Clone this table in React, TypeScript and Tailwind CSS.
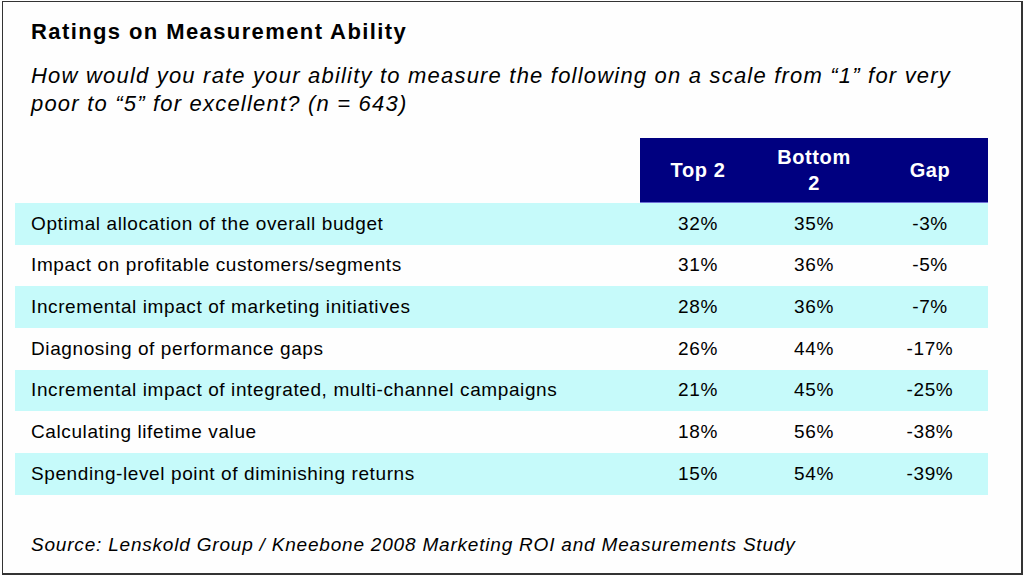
const rows = [
  { label: "Optimal allocation of the overall budget", top: "32%", bottom: "35%", gap: "-3%" },
  { label: "Impact on profitable customers/segments", top: "31%", bottom: "36%", gap: "-5%" },
  { label: "Incremental impact of marketing initiatives", top: "28%", bottom: "36%", gap: "-7%" },
  { label: "Diagnosing of performance gaps", top: "26%", bottom: "44%", gap: "-17%" },
  { label: "Incremental impact of integrated, multi-channel campaigns", top: "21%", bottom: "45%", gap: "-25%" },
  { label: "Calculating lifetime value", top: "18%", bottom: "56%", gap: "-38%" },
  { label: "Spending-level point of diminishing returns", top: "15%", bottom: "54%", gap: "-39%" },
];

const App = () => {
  return (
    <div className="w-[1024px] h-[576px] bg-[#fefefe] pt-[1px] pl-[2px] overflow-hidden">
      <div
        className="w-[1021px] h-[574px] border-t border-l border-r-2 border-b-2 border-[#333] bg-[#fefefe] text-black"
        style={{ fontFamily: '"Liberation Sans", Arial, sans-serif' }}
      >
        {/* Title + question */}
        <div className="pl-[28px] pt-[17px]">
          <h1 className="text-[22px] leading-[26px] font-bold tracking-[1.4px]">Ratings on Measurement Ability</h1>
          <p className="mt-[17px] text-[22px] leading-[28px] italic tracking-[1.2px] whitespace-nowrap">
            How would you rate your ability to measure the following on a scale from “1” for very
            <br />
            poor to “5” for excellent? (n = 643)
          </p>
        </div>

        {/* Table */}
        <div className="mt-[20px] ml-[12px] w-[973px]">
          <div className="flex">
            <div className="flex-1" />
            <div className="w-[348px] h-[65px] bg-[#000080] border-b border-[#6f6fd6] grid grid-cols-3 text-white font-bold text-[20px] leading-[26px] tracking-[0.6px]">
              <div className="flex items-center justify-center text-center">Top 2</div>
              <div className="flex items-center justify-center text-center">
                Bottom
                <br />2
              </div>
              <div className="flex items-center justify-center text-center">Gap</div>
            </div>
          </div>
          {rows.map((row, i) => (
            <div
              key={row.label}
              className={`flex items-center h-[41.7px] text-[19px] tracking-[0.6px] ${i % 2 === 0 ? "bg-[#c6fafa]" : ""}`}
            >
              <div className="flex-1 pl-[16px] whitespace-nowrap">{row.label}</div>
              <div className="w-[348px] grid grid-cols-3 text-center">
                <div>{row.top}</div>
                <div>{row.bottom}</div>
                <div>{row.gap}</div>
              </div>
            </div>
          ))}
        </div>

        {/* Source */}
        <p className="mt-[39px] pl-[28px] text-[19px] leading-[22px] italic tracking-[0.8px] whitespace-nowrap">
          Source: Lenskold Group / Kneebone 2008 Marketing ROI and Measurements Study
        </p>
      </div>
    </div>
  );
};

export default App;
